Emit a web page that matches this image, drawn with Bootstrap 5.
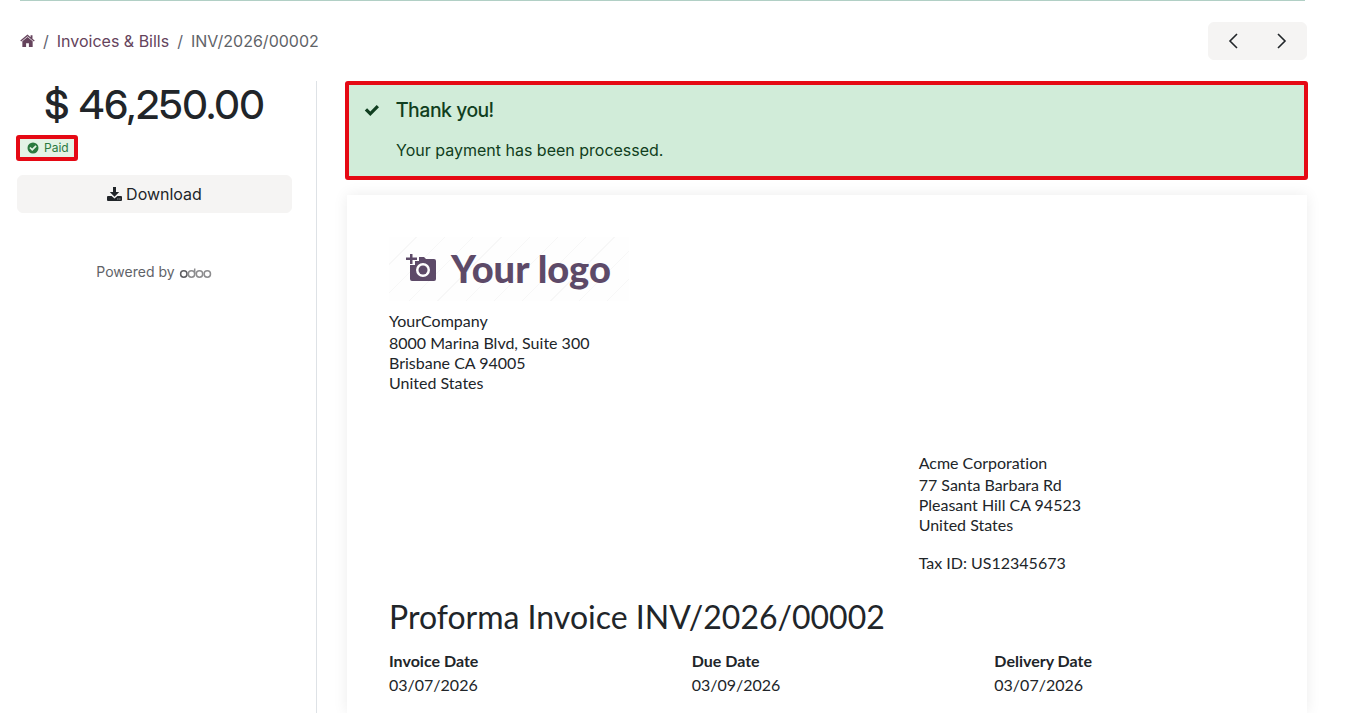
<!DOCTYPE html>
<html lang="en">
<head>
<meta charset="utf-8">
<meta name="viewport" content="width=device-width, initial-scale=1">
<title>INV/2026/00002</title>
<link rel="stylesheet" href="https://cdn.jsdelivr.net/npm/bootstrap@5.3.0/dist/css/bootstrap.min.css">
<style>
body{font-family:Inter,sans-serif;font-size:16px;line-height:24px;color:#212529;background:#fff;overflow-x:hidden}
svg{fill:currentColor;flex:none}
svg.line-art{fill:none;stroke:currentColor}
.portal{padding-left:17px;padding-right:37px}
.top-rule{height:1px;background:#b1cfc5;margin:0 3px}
.top-bar{padding-top:21px;padding-bottom:21px}
.breadcrumb{--bs-breadcrumb-divider-color:#5f636f;--bs-breadcrumb-item-active-color:#5f6368;--bs-breadcrumb-item-padding-x:8px;padding-left:3px;font-size:16px}
.breadcrumb a{color:#65435c;text-decoration:none}
.breadcrumb svg{display:block;margin-top:4px}
.soft{--bs-btn-bg:#f5f4f3;--bs-btn-hover-bg:#ebe9e7;--bs-btn-border-color:#f5f4f3;--bs-btn-color:#212529;--bs-btn-line-height:24px}
.pager{margin-right:1px}
.pager .btn{width:50px;height:38px;padding:0}
.pager svg{display:block;margin:auto}
.sidebar{width:300px;flex:none;padding-right:24px;border-right:1px solid #dee2e6}
.amount{font-family:"Inter Display",Inter,sans-serif;font-size:40px;line-height:48px;font-weight:500;text-align:center;margin:0 0 6px}
.marked{border:4px solid #e50914;border-radius:3px}
.paid{display:inline-flex;align-items:center;gap:5px;height:26px;margin-left:-1px;padding:0 5px 1px 7px;background:#e4f3e5;color:#2c7a3f;font-size:12px;line-height:18px}
.download{margin-top:14px;height:38px}
.powered{margin-top:49px;font-size:14px;line-height:20px;color:#5f6368}
.powered a{color:#8c8c8e;text-decoration:none}
.main-pane{padding-left:28px}
.notice{background:#d1ecd9;color:#103e20;padding:13px 15px 14px;margin:0 0 15px}
.notice h1{font-family:"Inter Display",Inter,sans-serif;font-size:20px;line-height:24px;font-weight:500;margin:0 0 16px}
.paper{font-family:Lato,sans-serif;font-variant-ligatures:none;line-height:20px;margin:0 1px 0 2px;padding:42px 42px 8px;box-shadow:0 0 14px rgba(0,0,0,.08)}
.brand-mark{width:240px;height:64px;padding-left:17px;padding-bottom:3px;gap:14px;color:#5d4a68;background:repeating-linear-gradient(135deg,#fefefe 0 19px,#f7f7f7 19px 20px);font-weight:900;font-size:38px}
address{margin:0;line-height:20px}
address .who{margin-bottom:2px}
.sender{padding-top:10px}
.recipient{padding-top:60px}
.tax-id{padding-top:18px}
.doc-title{font-size:32px;line-height:40px;font-weight:400;margin:24px 0 12px}
.row{--bs-gutter-x:32px}
.fact{line-height:24px}
</style>
</head>
<body>
<div class="portal d-flex flex-column min-vh-100">
  <div class="top-rule"></div>
  <header class="top-bar d-flex justify-content-between align-items-center">
    <nav aria-label="Breadcrumb">
      <ol class="breadcrumb mb-0">
        <li class="breadcrumb-item"><a href="#" aria-label="Home"><svg width="15" height="15" viewBox="0 0 16 16"><path d="M8 4.200 2.500 8.800V15h4v-4h3v4h4V8.800zM8 1.600.3 8l.9 1.100L8 3.400l6.800 5.700.9-1.100-2.400-2V2.400h-2v2z"/></svg></a></li>
        <li class="breadcrumb-item"><a href="#">Invoices &amp; Bills</a></li>
        <li class="breadcrumb-item active" aria-current="page">INV/2026/00002</li>
      </ol>
    </nav>
    <div class="btn-group pager">
      <button type="button" class="btn soft" aria-label="Previous"><svg class="line-art" width="16" height="18" viewBox="0 0 16 18"><path d="M12 2 5 9l7 7" stroke-width="1.600"/></svg></button>
      <button type="button" class="btn soft" aria-label="Next"><svg class="line-art" width="16" height="18" viewBox="0 0 16 18"><path d="m4 2 7 7-7 7" stroke-width="1.600"/></svg></button>
    </div>
  </header>
  <div class="d-flex flex-grow-1">
    <aside class="sidebar">
      <h2 class="amount">$ 46,250.00</h2>
      <div class="d-flex"><span class="paid marked"><svg width="12" height="12" viewBox="0 0 12 12"><path fill-rule="evenodd" d="M6 .5a5.500 5.500 0 1 0 0 11 5.500 5.500 0 0 0 0-11M5.200 9 2.300 6.100l1.200-1.200 1.700 1.700 3.300-3.300 1.200 1.200z"/></svg>Paid</span></div>
      <button type="button" class="btn soft download w-100 d-flex align-items-center justify-content-center gap-1"><svg width="15" height="16" viewBox="0 0 15 16"><path fill-rule="evenodd" d="M6 1h3v5h3.200L7.500 10.700 2.800 6H6zM1 10h3.600l2.900 2.600 2.900-2.600H14q1 0 1 1v3q0 1-1 1H1q-1 0-1-1v-3q0-1 1-1m9.500 2.600v.8h.8v-.8zm2 0v.8h.8v-.8z"/></svg>Download</button>
      <div class="powered d-flex justify-content-center gap-1"><span>Powered by</span><a href="#" aria-label="Odoo"><svg class="line-art d-block" width="34" height="20" viewBox="0 0 34 20" stroke-width="1.500"><circle cx="4.800" cy="12" r="3.200" stroke="#5d5d61"/><circle cx="12.500" cy="12" r="3.200"/><path d="M15.700 6.500V12"/><circle cx="20.500" cy="12" r="3.200"/><circle cx="28.300" cy="12" r="3.200"/></svg></a></div>
    </aside>
    <main class="main-pane flex-grow-1 d-flex flex-column">
      <div class="notice marked d-flex" role="status">
        <svg class="mt-1 me-3" width="16" height="16" viewBox="0 0 16 16"><path d="m.8 8.600 2.300-2.300 3.200 3.100L12.700 3 15 5.300 6.300 14z"/></svg>
        <div><h1>Thank you!</h1><p class="mb-0">Your payment has been processed.</p></div>
      </div>
      <article class="paper flex-grow-1">
        <div class="brand-mark d-flex align-items-center">
          <svg width="31" height="30" viewBox="0 0 31 30"><path fill-rule="evenodd" d="M4 12h5V8h4V4h5l2 2h8q2 0 2 2v18q0 2-2 2H6q-2 0-2-2zM17 10a7 7 0 1 0 0 14 7 7 0 0 0 0-14M4 1h2.500v3.500H11V7H6.500v4H4V7H0V4.500h4z"/><circle cx="17" cy="17" r="4.500"/></svg>
          <span>Your logo</span>
        </div>
        <address class="sender"><div class="who">YourCompany</div>8000 Marina Blvd, Suite 300<br>Brisbane CA 94005<br>United States</address>
        <div class="row recipient">
          <div class="col-5 offset-7"><address><div class="who">Acme Corporation</div>77 Santa Barbara Rd<br>Pleasant Hill CA 94523<br>United States</address><div class="tax-id">Tax ID: US12345673</div></div>
        </div>
        <h2 class="doc-title">Proforma Invoice INV/2026/00002</h2>
        <div class="row fact">
          <div class="col-4"><strong>Invoice Date</strong><div>03/07/2026</div></div>
          <div class="col-4"><strong>Due Date</strong><div>03/09/2026</div></div>
          <div class="col-4"><strong>Delivery Date</strong><div>03/07/2026</div></div>
        </div>
      </article>
    </main>
  </div>
</div>
<script src="https://cdn.jsdelivr.net/npm/bootstrap@5.3.0/dist/js/bootstrap.bundle.min.js"></script>
</body>
</html>
